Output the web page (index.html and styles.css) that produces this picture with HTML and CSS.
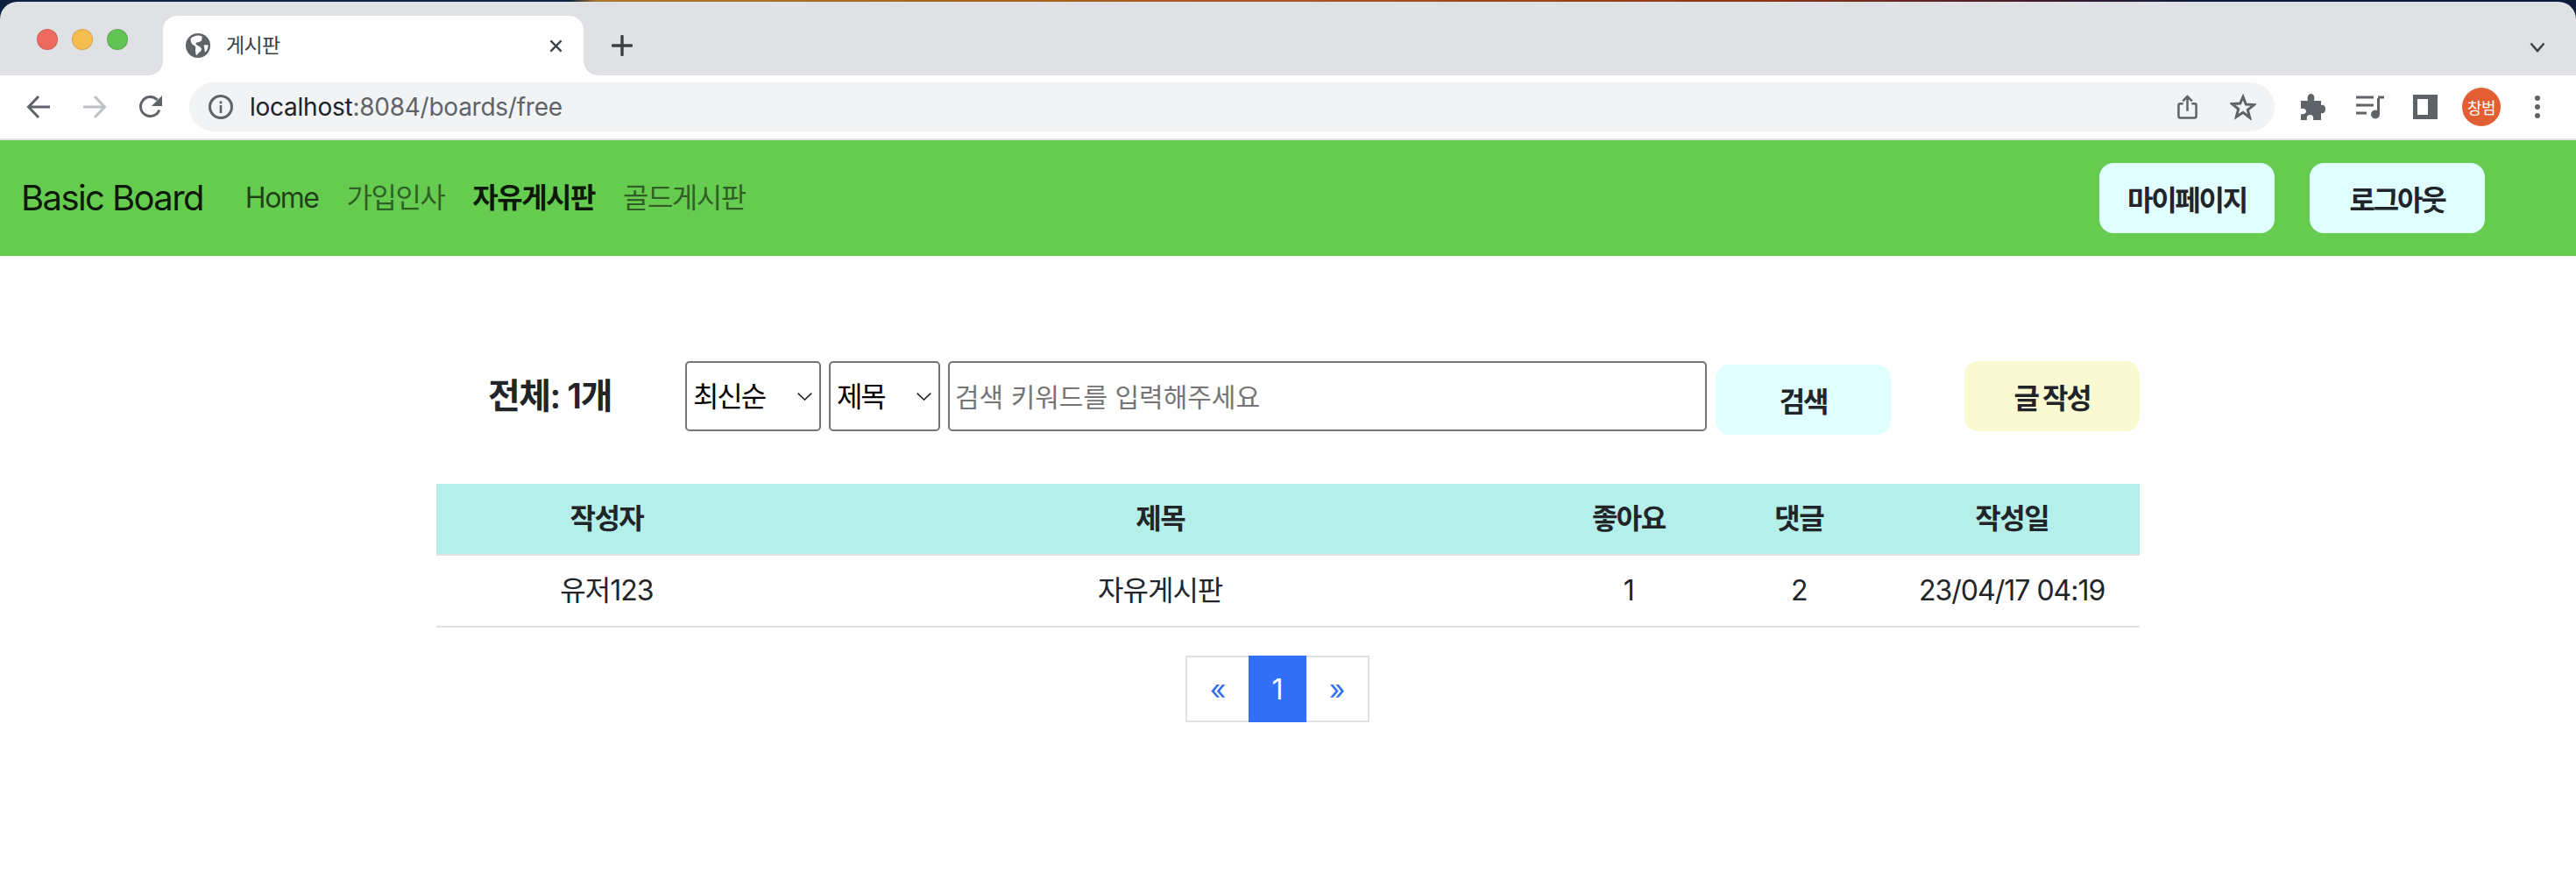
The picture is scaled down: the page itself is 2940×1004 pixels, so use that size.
FILE: index.html
```html
<!DOCTYPE html>
<html lang="ko">
<head>
<meta charset="utf-8">
<title>게시판</title>
<link rel="stylesheet" href="styles.css">
</head>
<body>
<div class="browser">
  <div class="tabstrip">
    <div class="lights">
      <span class="light red"></span>
      <span class="light yellow"></span>
      <span class="light green"></span>
    </div>
    <div class="tab">
      <svg class="favicon" viewBox="0 0 28 28"><circle cx="14" cy="14" r="14" fill="#5f6368"/><path d="M12.500 2.500c-3 .4-6 2-8 4.800 0 0 .5 3.700 2.200 5.500 1.600 1.700 4 1.400 4.800 3.200.6 1.400-.3 2.700.4 4.500.4 1 .9 3.500 1.500 4.500 1 .3 1.500-1 2-2.200.7-1.500 2.900-2.700 3.100-4.500.2-1.700-1.500-3.400-3.300-3.700-1.800-.3-2.900-1.100-3.800-1.900-.8-.7.4-2.200 1.800-2.300 1.500-.1 1.700-1.500 3.300-1.800C18 7.900 17 5 17.200 3 15.700 2.400 14 2.300 12.500 2.500z" fill="#fff" transform="rotate(8 14 14)"/><path d="M21 13.500c1.600-.4 3.800-.2 4.500 0 .3 3-1.200 6-3 8-1-.5-1-2-1-3.500 0-1.700-1.500-4-.5-4.500z" fill="#fff"/></svg>
      <span class="tab-title">게시판</span>
      <svg class="tab-close" viewBox="0 0 16 16"><path d="M1.500 1.500l13 13M14.500 1.500l-13 13" stroke="#3c4043" stroke-width="2.400" fill="none"/></svg>
    </div>
    <svg class="newtab" viewBox="0 0 24 24"><path d="M12 1.500v21M1.500 12h21" stroke="#3c4043" stroke-width="3.400" stroke-linecap="round" fill="none"/></svg>
    <svg class="tabsearch" viewBox="0 0 18 12"><path d="M1.500 1.500L9 10l7.500-8.500" stroke="#3c4043" stroke-width="2.500" fill="none"/></svg>
  </div>
  <div class="toolbar">
    <div class="navbtns">
      <svg class="tool" viewBox="0 0 28 28"><path d="M27 14H3M14 2L2.500 14 14 26" stroke="#5f6368" stroke-width="3" fill="none"/></svg>
      <svg class="tool" viewBox="0 0 28 28"><path d="M1 14h24M14 2l11.500 12L14 26" stroke="#bdc1c6" stroke-width="3" fill="none"/></svg>
      <svg class="tool" viewBox="0 0 28 28"><path d="M23.800 17.500A11 11 0 1 1 21.500 6" stroke="#5f6368" stroke-width="3" fill="none"/><path d="M27 1v12H15z" fill="#5f6368"/></svg>
    </div>
    <div class="omnibox">
      <svg class="info" viewBox="0 0 28 28"><circle cx="14" cy="14" r="12.500" stroke="#5f6368" stroke-width="3" fill="none"/><rect x="12.700" y="12" width="2.600" height="9" fill="#5f6368"/><rect x="12.700" y="7.500" width="2.600" height="2.800" fill="#5f6368"/></svg>
      <span class="url"><span class="host">localhost</span>:8084/boards/free</span>
      <svg class="share" viewBox="0 0 24 30"><path d="M7 11H3.500C2.100 11 1.500 11.700 1.500 13v13c0 1.300.6 2 2 2h17c1.400 0 2-.7 2-2V13c0-1.300-.6-2-2-2H17M12 20V2.500M6.500 8L12 2.500 17.500 8" stroke="#5f6368" stroke-width="2.600" fill="none"/></svg>
      <svg class="star" viewBox="0 0 30 30"><path d="M15 3.500l3.300 8.600 9.200.5-7.200 5.800 2.400 8.900L15 21.300l-7.700 5 2.400-8.900-7.200-5.800 9.200-.5z" stroke="#5f6368" stroke-width="3" fill="none"/></svg>
    </div>
    <div class="extensions">
      <svg class="puzzle" viewBox="0 0 28 30"><path d="M0 8H8C7 4 8 0 11.500 0S16 4 15 8H23V13C27 12 28 15 28 17.500S27 23 23 22V30H14C15 26 13 24 10.500 24S6 26 7 30H0V23C4 24 6 22 6 20S4 16 0 17Z" fill="#5f6368"/></svg>
      <svg class="media" viewBox="0 0 32 28"><path d="M0 3h20M0 12h20M0 21h12" stroke="#5f6368" stroke-width="3" fill="none"/><path d="M25.500 4v18" stroke="#5f6368" stroke-width="3" fill="none"/><path d="M25 3h7" stroke="#5f6368" stroke-width="3" fill="none"/><circle cx="22" cy="22.500" r="5" fill="#5f6368"/></svg>
      <span class="sidepanel"></span>
      <span class="avatar">창범</span>
      <svg class="menu" viewBox="0 0 6 26"><circle cx="3" cy="3" r="3" fill="#5f6368"/><circle cx="3" cy="13" r="3" fill="#5f6368"/><circle cx="3" cy="23" r="3" fill="#5f6368"/></svg>
    </div>
  </div>
</div>

<nav class="navbar">
  <a class="brand">Basic Board</a>
  <ul class="nav-list">
    <li class="nav-item home">Home</li>
    <li class="nav-item">가입인사</li>
    <li class="nav-item current">자유게시판</li>
    <li class="nav-item">골드게시판</li>
  </ul>
  <div class="nav-actions">
    <button class="btn btn-cyan">마이페이지</button>
    <button class="btn btn-cyan">로그아웃</button>
  </div>
</nav>

<main class="board">
  <div class="search-row">
    <div class="total">전체: 1개</div>
    <select class="field picker sort"><option>최신순</option></select>
    <select class="field picker scope"><option>제목</option></select>
    <input class="field keyword" type="text" placeholder="검색 키워드를 입력해주세요">
    <button class="btn btn-cyan btn-search">검색</button>
    <button class="btn btn-yellow btn-write">글 작성</button>
  </div>

  <table class="posts">
    <thead>
      <tr>
        <th class="c-author">작성자</th>
        <th class="c-title">제목</th>
        <th class="c-likes">좋아요</th>
        <th class="c-replies">댓글</th>
        <th class="c-date">작성일</th>
      </tr>
    </thead>
    <tbody>
      <tr>
        <td>유저123</td>
        <td>자유게시판</td>
        <td>1</td>
        <td>2</td>
        <td>23/04/17 04:19</td>
      </tr>
    </tbody>
  </table>

  <ul class="pagination">
    <li class="page">«</li>
    <li class="page active">1</li>
    <li class="page">»</li>
  </ul>
</main>
</body>
</html>
```

FILE: styles.css
```css
* { box-sizing: border-box; }
html, body { margin: 0; padding: 0; background: #fff; }
body {
  font-family: "Inter", "Noto Sans CJK KR", sans-serif;
  color: #212529;
  font-size: 32px;
  overflow: hidden;
}

/* browser window chrome */
.browser {
  background: linear-gradient(90deg, #0d2240 0, #0d2240 650px, #a8762f 680px, #a8541f 1500px, #8e3616 2000px, #3b1a2e 2350px, #0d1c3c 2500px, #0d1c3c 100%);
  padding-top: 2px;
}
.tabstrip {
  height: 84px;
  background: #dfe1e5;
  border-radius: 20px 20px 0 0;
  display: flex;
  align-items: flex-start;
}
.lights {
  width: 186px;
  flex: none;
  display: flex;
  gap: 16px;
  padding: 31px 0 0 42px;
}
.light {
  width: 24px;
  height: 24px;
  border-radius: 50%;
  border: 1px solid rgba(0, 0, 0, .12);
}
.red { background: #ee6a5f; }
.yellow { background: #f5bd4f; }
.green { background: #61c454; }
.tab {
  position: relative;
  width: 480px;
  height: 68px;
  margin-top: 16px;
  background: #fff;
  border-radius: 16px 16px 0 0;
  display: flex;
  align-items: center;
  padding: 0 24px 0 26px;
  flex: none;
}
.tab::before, .tab::after {
  content: "";
  position: absolute;
  bottom: 0;
  width: 16px;
  height: 16px;
}
.tab::before { left: -16px; background: radial-gradient(circle at 0 0, #dfe1e5 15.500px, #fff 16px); }
.tab::after { right: -16px; background: radial-gradient(circle at 100% 0, #dfe1e5 15.500px, #fff 16px); }
.favicon { width: 28px; height: 28px; flex: none; }
.tab-title {
  margin: -4px 0 0 18px;
  font-size: 23px;
  letter-spacing: -.6px;
  color: #3c4043;
  flex: 1;
}
.tab-close { width: 15px; height: 15px; flex: none; }
.newtab { width: 24px; height: 24px; margin: 38px 0 0 32px; flex: none; }
.tabsearch { width: 18px; height: 12px; margin: 46px 35px 0 auto; flex: none; }

.toolbar {
  height: 74px;
  background: #fff;
  border-bottom: 2px solid #dfe0e2;
  display: flex;
  align-items: flex-start;
}
.navbtns {
  width: 216px;
  flex: none;
  display: flex;
  gap: 36px;
  padding: 22px 0 0 30px;
}
.tool { width: 28px; height: 28px; flex: none; }
.omnibox {
  width: 2380px;
  height: 56px;
  margin-top: 8px;
  flex: none;
  background: #f1f3f4;
  border-radius: 28px;
  display: flex;
  align-items: center;
  padding-left: 22px;
}
.info { width: 28px; height: 28px; flex: none; }
.url {
  margin-left: 19px;
  font-size: 28px;
  letter-spacing: -.25px;
  color: #5f6368;
  flex: 1;
}
.host { color: #202124; }
.share { width: 23px; height: 30px; flex: none; margin-right: 37px; margin-top: -1px; }
.star { width: 30px; height: 30px; flex: none; margin-right: 21px; }
.extensions {
  flex: 1;
  display: flex;
  align-items: center;
  height: 72px;
}
.puzzle { width: 28px; height: 30px; margin-left: 30px; flex: none; }
.media { width: 32px; height: 28px; margin-left: 35px; flex: none; }
.sidepanel {
  width: 28px;
  height: 28px;
  margin-left: 33px;
  border: 5px solid #5f6368;
  border-right-width: 11px;
  flex: none;
}
.avatar {
  width: 44px;
  height: 44px;
  margin-left: 28px;
  border-radius: 50%;
  background: #e25f33;
  color: #fff;
  font-size: 18px;
  letter-spacing: -.5px;
  display: flex;
  align-items: center;
  justify-content: center;
  flex: none;
}
.menu { width: 6px; height: 26px; margin-left: 39px; flex: none; }

/* site navbar */
.navbar {
  height: 132px;
  background: #66cc4f;
  display: flex;
  align-items: center;
  padding: 0 104px 0 24px;
}
.brand {
  font-size: 40px;
  line-height: 60px;
  letter-spacing: -1.600px;
  color: rgba(0, 0, 0, .9);
  margin-right: 48px;
}
.nav-list {
  list-style: none;
  display: flex;
  gap: 32px;
  margin: 0;
  padding: 0;
  flex: 1;
}
.nav-item {
  line-height: 48px;
  letter-spacing: -1.500px;
  color: rgba(0, 0, 0, .55);
}
.home { color: rgba(0, 0, 0, .7); }
.current { font-weight: 700; color: rgba(0, 0, 0, .9); }
.nav-actions { display: flex; gap: 40px; }

.btn {
  width: 200px;
  height: 80px;
  border: 0;
  border-radius: 16px;
  font-family: inherit;
  font-size: 32px;
  font-weight: 700;
  letter-spacing: -2.200px;
  color: #212529;
  padding: 0;
}
.btn-cyan { background: #e0ffff; }
.btn-yellow { background: #fafad2; }

/* board */
.board {
  width: 1944px;
  margin: 120px auto 0;
}
.search-row {
  display: flex;
  align-items: flex-start;
  height: 140px;
}
.total {
  width: 259px;
  margin-right: 25px;
  height: 80px;
  line-height: 80px;
  text-align: center;
  font-size: 40px;
  font-weight: 600;
  letter-spacing: -1.500px;
  flex: none;
}
.field {
  height: 80px;
  border: 2px solid #767676;
  border-radius: 5px;
  background-color: #fff;
  color: #000;
  font-family: inherit;
  font-size: 32px;
  flex: none;
}
.picker {
  appearance: none;
  padding: 0 0 0 7px;
  letter-spacing: -2.100px;
  background-image: url("data:image/svg+xml,%3Csvg xmlns='http://www.w3.org/2000/svg' viewBox='0 0 17 9'%3E%3Cpath d='M.7.7l7.800 7.300L16.300.7' fill='none' stroke='%23222' stroke-width='1.600'/%3E%3C/svg%3E");
  background-repeat: no-repeat;
  background-size: 17px 9px;
  background-position: right 8px center;
}
.sort { width: 155px; margin-right: 9px; }
.scope { width: 127px; margin-right: 9px; }
.keyword { width: 866px; padding: 0 6px; }
.keyword::placeholder { color: #757575; font-size: 30px; }
.btn-search { margin: 4px 84px 0 10px; }

.posts {
  width: 100%;
  border-collapse: separate;
  border-spacing: 0;
  table-layout: fixed;
}
.c-author { width: 20%; }
.c-title { width: 45%; }
.c-likes, .c-replies { width: 10%; }
.c-date { width: 15%; }
.posts th, .posts td {
  height: 82px;
  padding: 0;
  text-align: center;
  font-size: 32px;
  line-height: 48px;
}
.posts th {
  background: #b5efe9;
  background-clip: padding-box;
  font-weight: 700;
  letter-spacing: -1.500px;
  border-bottom: 2px solid #e0dfe5;
}
.posts td {
  border-bottom: 2px solid #dee2e6;
  letter-spacing: -1px;
}

.pagination {
  list-style: none;
  display: flex;
  justify-content: center;
  margin: 32px 0 0;
  padding: 0 24px 0 0;
}
.page {
  width: 74px;
  height: 76px;
  line-height: 74px;
  text-align: center;
  border: 2px solid #dee2e6;
  color: #316ff6;
  background: #fff;
}
.page.active {
  width: 66px;
  margin: 0 -2px;
  position: relative;
  background: #316ff6;
  border-color: #316ff6;
  color: #fff;
}
```
